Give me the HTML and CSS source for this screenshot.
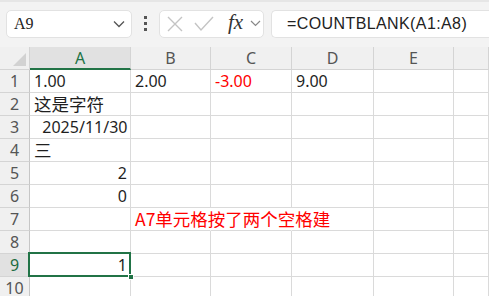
FILE: index.html
```html
<!DOCTYPE html>
<html>
	<head>
		<meta charset="UTF-8">
		<title>COUNTBLANK</title>
		<link rel="stylesheet" href="styles.css">
	</head>
	<body>
		<div class="bar">
			<div class="namebox">
				<span class="ref">A9</span>
				<svg class="chev" width="12" height="8" viewBox="0 0 12 8"><path d="M1 1.5 L6 6.5 L11 1.5" fill="none" stroke="#555" stroke-width="1.3"/></svg>
			</div>
			<div class="dots"><i></i><i></i><i></i></div>
			<div class="fxbox">
				<svg width="16" height="16" viewBox="0 0 16 16"><path d="M1 1 L15 15 M15 1 L1 15" stroke="#c4c4c4" stroke-width="1.4" fill="none"/></svg>
				<svg width="20" height="16" viewBox="0 0 20 16"><path d="M1 7 L7 14 L19 1" stroke="#c4c4c4" stroke-width="1.4" fill="none"/></svg>
				<span class="fx">fx</span>
				<svg class="chev2" width="11" height="7" viewBox="0 0 11 7"><path d="M1 1 L5.5 5.5 L10 1" fill="none" stroke="#888" stroke-width="1.2"/></svg>
			</div>
			<div class="formula">=COUNTBLANK(A1:A8)</div>
		</div>

		<div class="sheet">
			<div class="hd corner"><span class="tri"></span></div>
			<div class="hd col on">A</div>
			<div class="hd col">B</div>
			<div class="hd col">C</div>
			<div class="hd col">D</div>
			<div class="hd col">E</div>
			<div class="hd col"></div>

			<div class="hd rn">1</div>
			<div class="c">1.00</div>
			<div class="c">2.00</div>
			<div class="c red">-3.00</div>
			<div class="c">9.00</div>
			<div class="c"></div>
			<div class="c"></div>

			<div class="hd rn">2</div>
			<div class="c"><span class="zh">这是字符</span></div>
			<div class="c"></div><div class="c"></div><div class="c"></div><div class="c"></div><div class="c"></div>

			<div class="hd rn">3</div>
			<div class="c">  2025/11/30</div>
			<div class="c"></div><div class="c"></div><div class="c"></div><div class="c"></div><div class="c"></div>

			<div class="hd rn">4</div>
			<div class="c"><span class="zh">三</span></div>
			<div class="c"></div><div class="c"></div><div class="c"></div><div class="c"></div><div class="c"></div>

			<div class="hd rn">5</div>
			<div class="c num">2</div>
			<div class="c"></div><div class="c"></div><div class="c"></div><div class="c"></div><div class="c"></div>

			<div class="hd rn">6</div>
			<div class="c num">0</div>
			<div class="c"></div><div class="c"></div><div class="c"></div><div class="c"></div><div class="c"></div>

			<div class="hd rn">7</div>
			<div class="c">  </div>
			<div class="c red spill"><span class="zh">A7单元格按了两个空格建</span></div>
			<div class="c spill"></div>
			<div class="c"></div><div class="c"></div><div class="c"></div>

			<div class="hd rn">8</div>
			<div class="c"></div><div class="c"></div><div class="c"></div><div class="c"></div><div class="c"></div><div class="c"></div>

			<div class="hd rn on">9</div>
			<div class="c num sel">1<span class="handle"></span></div>
			<div class="c"></div><div class="c"></div><div class="c"></div><div class="c"></div><div class="c"></div>

			<div class="hd rn">10</div>
			<div class="c"></div><div class="c"></div><div class="c"></div><div class="c"></div><div class="c"></div><div class="c"></div>
		</div>
	</body>
</html>
```

FILE: styles.css
```css
*{
	margin: 0;
	padding: 0;
	box-sizing: border-box;
}
body{
	width: 489px;
	height: 296px;
	overflow: hidden;
	background: #fff;
	font-family: "Noto Sans", "Noto Sans CJK SC", sans-serif;
	color: #1f1f1f;
}
.bar{
	height: 47px;
	background: #f3f3f3;
	border-top: 2px solid #e6e6e6;
	display: flex;
	align-items: center;
	padding: 0 0 2px 6px;
}
.namebox{
	width: 126px;
	height: 28px;
	background: #fff;
	border: 1px solid #e2e2e2;
	border-radius: 5px;
	display: flex;
	align-items: center;
	justify-content: space-between;
	padding: 0 6px 0 7px;
}
.ref{
	font-family: "Liberation Serif", serif;
	font-size: 16px;
	color: #222;
}
.dots{
	width: 27px;
	display: flex;
	flex-direction: column;
	align-items: center;
	gap: 3px;
}
.dots i{
	display: block;
	width: 3px;
	height: 3px;
	background: #555;
}
.fxbox{
	width: 105px;
	height: 28px;
	background: #fff;
	border: 1px solid #e2e2e2;
	border-radius: 5px;
	display: flex;
	align-items: center;
	padding-left: 7px;
	gap: 11px;
}
.fx{
	font-family: "Liberation Serif", serif;
	font-style: italic;
	font-size: 21px;
	color: #333;
	margin-left: 3px;
	margin-top: -3px;
}
.chev2{
	margin-left: -4px;
}
.formula{
	flex: 1;
	height: 28px;
	margin-left: 7px;
	background: #fff;
	border: 1px solid #e2e2e2;
	border-right: none;
	border-radius: 5px 0 0 5px;
	padding-left: 15px;
	font-family: "Liberation Sans", sans-serif;
	font-size: 16px;
	letter-spacing: 0.4px;
	line-height: 26px;
	color: #222;
}
.sheet{
	display: grid;
	grid-template-columns: 30px 101px 80px 81px 82px 80px 1fr;
	grid-template-rows: 23px repeat(10, 23px);
}
.hd{
	background: #f0f0f0;
	border-right: 1px solid #d4d4d4;
	border-bottom: 1px solid #d4d4d4;
	color: #555;
	font-size: 16px;
	text-align: center;
	line-height: 22px;
}
.col.on{
	background: #e1e1e1;
	color: #217346;
	border-bottom: 2px solid #217346;
}
.rn{
	border-right-color: #c6c6c6;
}
.rn.on{
	background: #e1e1e1;
	color: #1d6b40;
}
.corner{
	position: relative;
}
.tri{
	position: absolute;
	right: 3px;
	bottom: 3px;
	width: 0;
	height: 0;
	border-left: 13px solid transparent;
	border-bottom: 13px solid #d2d2d2;
}
.c{
	border-right: 1px solid #dadada;
	border-bottom: 1px solid #dadada;
	font-size: 16px;
	line-height: 22px;
	padding: 0 3px 0 4px;
	white-space: pre;
	position: relative;
}
.zh{
	font-family: "Noto Sans CJK SC", sans-serif;
	font-size: 17.5px;
	line-height: 22px;
}
.num{
	text-align: right;
}
.red{
	color: #ff0000;
}
.spill{
	border-right-color: transparent;
	overflow: visible;
	z-index: 1;
}
.sel::after{
	content: "";
	position: absolute;
	left: -2px;
	top: -2px;
	right: -1px;
	bottom: -1px;
	border: 2px solid #217346;
}
.handle{
	position: absolute;
	right: -4px;
	bottom: -4px;
	width: 6px;
	height: 6px;
	background: #217346;
	border: 1px solid #fff;
	z-index: 2;
}
```
